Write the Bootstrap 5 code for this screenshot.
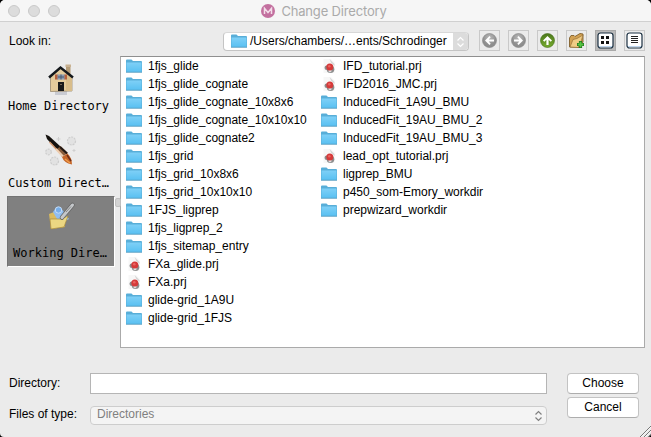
<!DOCTYPE html>
<html lang="en">
<head>
<meta charset="utf-8">
<title>Change Directory</title>
<link href="https://cdn.jsdelivr.net/npm/bootstrap@5.3.0/dist/css/bootstrap.min.css" rel="stylesheet">
<style>
html{background:#000}
body{width:651px;height:437px;overflow:hidden;background:#000;font:12px/18px "Liberation Sans",Arial,sans-serif;color:#000}
.window{height:437px;background:#ebebeb;border-radius:5px 5px 4px 4px;overflow:hidden}
.titlebar{height:22px;background:#f6f6f6;border-bottom:1px solid #d0d0d0;color:#aaa;font-family:Inter,sans-serif;font-size:13px;padding-right:3px}
.lights{left:8px;top:5px;gap:8px}
.lights i{width:12px;height:12px;border-radius:50%;background:#dcdcdc;border:1px solid #c9c9c9}
.title-text{letter-spacing:-.17px}
.lookrow{height:34px;padding:8px 6px 0 9px}
.path{width:246px;height:19px;margin-top:2px;border-radius:4px;background:#fff;border:1px solid #c4c4c4;border-top-color:#d8d8d8;line-height:16px}
.path-text{white-space:nowrap}
.path .stepper{width:15px;background:#dcdcdc}
.tool{width:21px;height:21px;padding:0;border:1px solid #c9c9c9;border-radius:0;background:#ebebeb}
.tool.on{background:#b9b9b9;border-color:#a9a9a9}
.main-area{height:292px}
.places{width:120px;font:12px/16px "DejaVu Sans Mono",monospace;padding-left:7px}
.place{width:108px;height:70px;border:1px solid transparent}
.place.on{height:71px;background:#808080;border-color:#737373 #fff #fff #737373}
.place span{white-space:pre}
.handle{left:115px;top:142px;width:6px;height:9px;background:#d3d3d3;border:1px solid #c0c0c0;border-radius:2px}
.files{width:525px;height:292px;background:#fff;border:1px solid #aaa;border-top-color:#8f8f8f;padding-left:5px}
.files ul{width:195px;margin:0;padding:0;list-style:none}
.files li{height:18px;display:flex;align-items:center;white-space:nowrap}
.files svg{margin-right:6px;flex:none}
.bottom{padding:25px 12px 0 9px}
.labels{width:81px;padding-top:1px;gap:13px}
.field{width:457px}
.dir{height:21px;border:1px solid #b5b5b5;border-radius:0;background:#fff;padding:0}
.types{height:19px;margin-top:12px;border:1px solid #cdcdcd;border-radius:4px;background:#f4f4f4;color:#808080;padding:0 3px 0 6px;line-height:15px}
.types span{padding-bottom:2px}
.actions{width:72px;margin-left:20px;gap:3px}
.push{height:21px;padding:0;background:#fff;border:1px solid #c3c3c3;border-bottom-color:#adadad;border-radius:4px;font-size:12px;line-height:17px;color:#000}
.grip{right:0;bottom:0}
</style>
</head>
<body>
<svg width="0" height="0" class="position-absolute">
<defs>
<linearGradient id="fg" x2="0" y2="1"><stop stop-color="#7fd0f7"/><stop offset="1" stop-color="#5bc1f2"/></linearGradient>
<radialGradient id="gg" cx=".5" cy=".3"><stop stop-color="#b9b9b9"/><stop offset="1" stop-color="#8e8e8e"/></radialGradient>
<linearGradient id="gr" x2="0" y2="1"><stop stop-color="#4c781b"/><stop offset="1" stop-color="#76ab2f"/></linearGradient>
<symbol id="folder" viewBox="0 0 16 16"><path d="M0 2.500Q0 1.500 1 1.500H5.500L7 3H15Q16 3 16 4V14H0Z" fill="#58aed8"/><path d="M.5 4.500H15.500V13.500H.5Z" fill="url(#fg)"/><path d="M0 14.500H16" stroke="#4795bd" stroke-opacity=".65"/></symbol>
<symbol id="prj" viewBox="0 0 16 16"><path d="M2.500 1H10L13.500 4.500V15H2.500Z" fill="#f7f7f7"/><path d="M8.500 1 13.500 6V8L10 4.500Z" fill="#d6d6d6"/><circle cx="5.800" cy="9.800" r="2.300" fill="#8a8a8a"/><circle cx="9.500" cy="11.300" r="3.800" fill="#8d8d8d"/><circle cx="9" cy="12.800" r="1.500" fill="#dedede"/><circle cx="8.800" cy="9" r="3.500" fill="#d63a3a"/><circle cx="8.300" cy="8.300" r="1.300" fill="#ea6561"/></symbol>
<symbol id="updown" viewBox="0 0 9 12"><path d="M1.500 4.500 4.500 1.500 7.500 4.500M1.500 7.500 4.500 10.500 7.500 7.500" fill="none" stroke="currentColor" stroke-width="1.200"/></symbol>
<symbol id="arrow" viewBox="0 0 15 15"><path d="M3 7.500 7.500 3 8.700 4.300 6.700 6.400H12V8.600H6.700L8.700 10.700 7.500 12Z" fill="#fff"/></symbol>
</defs></svg>

<div class="window position-relative">
  <header class="titlebar position-relative d-flex justify-content-center align-items-center">
    <div class="lights position-absolute d-flex"><i></i><i></i><i></i></div>
    <svg width="14" height="14" viewBox="0 0 14 14" style="margin-right:6px"><circle cx="7" cy="7" r="7" fill="#c3709f"/><path d="M3.500 10V4.300L7 8.500 10.500 4.300V10" fill="none" stroke="#f3dde9" stroke-width="1.500"/></svg>
    <span class="title-text">Change Directory</span>
  </header>

  <div class="lookrow d-flex align-items-start">
    <span class="me-auto" style="margin-top:2px">Look in:</span>
    <div class="path d-flex overflow-hidden">
      <svg width="16" height="16" style="margin:0 3px 0 7px;flex:none"><use href="#folder"/></svg>
      <span class="path-text flex-grow-1">/Users/chambers/…ents/Schrodinger</span>
      <span class="stepper d-flex align-items-center justify-content-center text-white"><svg width="9" height="12"><use href="#updown"/></svg></span>
    </div>
    <div class="d-flex gap-2" style="margin-left:10px">
      <button class="tool btn d-flex align-items-center justify-content-center" aria-label="Back"><svg width="15" height="15"><circle cx="7.500" cy="7.500" r="7" fill="url(#gg)" stroke="#858585" stroke-width=".6"/><use href="#arrow" width="15" height="15"/></svg></button>
      <button class="tool btn d-flex align-items-center justify-content-center" aria-label="Forward"><svg width="15" height="15"><circle cx="7.500" cy="7.500" r="7" fill="url(#gg)" stroke="#858585" stroke-width=".6"/><g transform="rotate(180 7.500 7.500)"><use href="#arrow" width="15" height="15"/></g></svg></button>
      <button class="tool btn d-flex align-items-center justify-content-center" aria-label="Up"><svg width="15" height="15"><circle cx="7.500" cy="7.500" r="7" fill="url(#gr)" stroke="#416b15" stroke-width=".6"/><g transform="rotate(90 7.500 7.500)"><use href="#arrow" width="15" height="15"/></g></svg></button>
      <button class="tool btn d-flex align-items-center justify-content-center" aria-label="New folder"><svg width="17" height="17" viewBox="0 0 17 17"><path d="M1.500 15V6L3 3.500H6L7 4.500 12 1.500 15 2V10L11 15.500Z" fill="#d2a153" stroke="#80602c" stroke-width=".9"/><path d="M2 15 5 7.500 9 6.500 15 3 12 13 10 15.500Z" fill="#f0cc85" stroke="#97713a" stroke-width=".7"/><path d="M12.500 9V16M9 12.500H16" stroke="#23751f" stroke-width="3.200"/><path d="M12.500 9.700V15.300M9.700 12.500H15.300" stroke="#56c442" stroke-width="1.800"/></svg></button>
      <button class="tool on btn d-flex align-items-center justify-content-center" aria-label="List view"><svg width="17" height="17" viewBox="0 0 17 17"><rect x="1" y="1" width="15" height="15" rx="2.500" fill="#fff" stroke="#1b3042" stroke-width="1.200"/><path d="M2 14.500H15" stroke="#bdd5ee"/><path d="M4 4H7V7H4ZM9 4H12V7H9ZM4 9H7V12H4ZM9 9H12V12H9Z" fill="#111"/></svg></button>
      <button class="tool btn d-flex align-items-center justify-content-center" aria-label="Detail view"><svg width="17" height="17" viewBox="0 0 17 17"><rect x="1" y="1" width="15" height="15" rx="2.500" fill="#fff" stroke="#1b3042" stroke-width="1.200"/><path d="M2 14.500H15" stroke="#bdd5ee"/><path d="M5 4.500H12M5 6.500H12M5 8.500H12M5 10.500H12" stroke="#222"/></svg></button>
    </div>
  </div>

  <div class="main-area d-flex position-relative">
    <aside class="places">
      <div class="place d-flex flex-column align-items-center">
        <svg width="26" height="32" viewBox="0 0 26 32" style="margin:7px 0 2px"><path d="M7 27H19V31H7Z" fill="#c9cbd2"/><path d="M18 1H22.500V11L18 7Z" fill="#b49c78"/><path d="M17.500 0.500H23V3H17.500Z" fill="#c9b292"/><path d="M2.500 12 13 3.500 24 12V27L2.500 27.500Z" fill="#e3cb9c" stroke="#8f8064" stroke-width=".7"/><path d="M18 8 24 12V27H18Z" fill="#d8bd8b"/><path d="M1 13.500 12.500 3.500 25 13.500" fill="none" stroke="#14181c" stroke-width="2.400"/><path d="M9 10.500H17V15.500H9Z" fill="#8a9bb2"/><path d="M7 10.500H9.500V15.500H7ZM16.500 10.500H19V15.500H16.500Z" fill="#b7613c"/><path d="M10 13H16M13 10.500V15.500" stroke="#4d5b6d"/><path d="M10 18H16V27H10Z" fill="#17191b"/><path d="M12 20.500H14" stroke="#766858"/></svg>
        <span style="margin-left:-7px;margin-right:-2px">Home Directory</span>
      </div>
      <div class="place d-flex flex-column align-items-center">
        <svg width="34" height="34" viewBox="0 0 34 34" style="margin:6px 0 8px"><g fill="#e2e2e2" stroke="#cdcdcd" stroke-width="1.200" stroke-dasharray="2 1"><circle cx="27.500" cy="8" r="4"/><circle cx="4.500" cy="19" r="2.800"/><circle cx="10.500" cy="28" r="4"/></g><path d="M14.500 4V8M12.500 6H16.500M30 16V19M28.500 17.500H31.500" stroke="#cfcfcf"/><path d="M1.500 1.500 5 3 17 14 13.500 17.500 3 6Z" fill="#15120f"/><path d="M5.500 9 15.500 19.500" stroke="#d69b72" stroke-width="1.500"/><path d="M13 16 16.500 13 24 20 18 24Z" fill="#8a5d3b"/><path d="M12 16 19.500 24" stroke="#efceb0" stroke-width="2"/><path d="M16 14 23 20.500" stroke="#211712" stroke-width="2"/><path d="M18 24 23.500 20.500Q28 25 28 31.500Q20 30 18 24Z" fill="#c56527"/><path d="M21 26 26 30" stroke="#ef9d4b" stroke-width="1.500"/><path d="M23 22 27 28" stroke="#6e2d15" stroke-width="1.500"/></svg>
        <span style="margin-left:-7px;margin-right:-2px">Custom Direct…</span>
      </div>
      <div class="place on d-flex flex-column align-items-center">
        <svg width="30" height="30" viewBox="0 0 30 30" style="margin:4px 0 14px"><path d="M3 13 8 11 9 13 19 14V26L5 28Z" fill="#dabb5e"/><path d="M7 11 10 6.500 15 7 23 18 14 23Z" fill="#8fbdf0"/><circle cx="12.500" cy="9" r="3.200" fill="#77aee9" stroke="#c6ddf7"/><path d="M4 18 15 18 22 15 18 26 5 28Z" fill="#ecd782" stroke="#a78a3c" stroke-width=".7"/><path d="M15 18 19 13" stroke="#577fae" stroke-width="2"/><path d="M16 16.500 26.500 4" stroke="#666" stroke-width="4.500" stroke-linecap="round"/><path d="M16 16.500 26.500 4" stroke="#c4c7ca" stroke-width="3" stroke-linecap="round"/><path d="M20 11 25 5.500" stroke="#888"/></svg>
        <span style="margin-right:2px">Working Dire…</span>
      </div>
    </aside>
    <section class="files d-flex">
      <ul>
        <li><svg width="16" height="16"><use href="#folder"/></svg><span>1fjs_glide</span></li>
        <li><svg width="16" height="16"><use href="#folder"/></svg><span>1fjs_glide_cognate</span></li>
        <li><svg width="16" height="16"><use href="#folder"/></svg><span>1fjs_glide_cognate_10x8x6</span></li>
        <li><svg width="16" height="16"><use href="#folder"/></svg><span>1fjs_glide_cognate_10x10x10</span></li>
        <li><svg width="16" height="16"><use href="#folder"/></svg><span>1fjs_glide_cognate2</span></li>
        <li><svg width="16" height="16"><use href="#folder"/></svg><span>1fjs_grid</span></li>
        <li><svg width="16" height="16"><use href="#folder"/></svg><span>1fjs_grid_10x8x6</span></li>
        <li><svg width="16" height="16"><use href="#folder"/></svg><span>1fjs_grid_10x10x10</span></li>
        <li><svg width="16" height="16"><use href="#folder"/></svg><span>1FJS_ligprep</span></li>
        <li><svg width="16" height="16"><use href="#folder"/></svg><span>1fjs_ligprep_2</span></li>
        <li><svg width="16" height="16"><use href="#folder"/></svg><span>1fjs_sitemap_entry</span></li>
        <li><svg width="16" height="16"><use href="#prj"/></svg><span>FXa_glide.prj</span></li>
        <li><svg width="16" height="16"><use href="#prj"/></svg><span>FXa.prj</span></li>
        <li><svg width="16" height="16"><use href="#folder"/></svg><span>glide-grid_1A9U</span></li>
        <li><svg width="16" height="16"><use href="#folder"/></svg><span>glide-grid_1FJS</span></li>
      </ul>
      <ul>
        <li><svg width="16" height="16"><use href="#prj"/></svg><span>IFD_tutorial.prj</span></li>
        <li><svg width="16" height="16"><use href="#prj"/></svg><span>IFD2016_JMC.prj</span></li>
        <li><svg width="16" height="16"><use href="#folder"/></svg><span>InducedFit_1A9U_BMU</span></li>
        <li><svg width="16" height="16"><use href="#folder"/></svg><span>InducedFit_19AU_BMU_2</span></li>
        <li><svg width="16" height="16"><use href="#folder"/></svg><span>InducedFit_19AU_BMU_3</span></li>
        <li><svg width="16" height="16"><use href="#prj"/></svg><span>lead_opt_tutorial.prj</span></li>
        <li><svg width="16" height="16"><use href="#folder"/></svg><span>ligprep_BMU</span></li>
        <li><svg width="16" height="16"><use href="#folder"/></svg><span>p450_som-Emory_workdir</span></li>
        <li><svg width="16" height="16"><use href="#folder"/></svg><span>prepwizard_workdir</span></li>
      </ul>
    </section>
    <div class="handle position-absolute"></div>
  </div>

  <form class="bottom d-flex">
    <div class="labels d-flex flex-column"><span>Directory:</span><span>Files of type:</span></div>
    <div class="field">
      <input class="dir form-control" type="text" aria-label="Directory">
      <div class="types d-flex justify-content-between align-items-center"><span>Directories</span><svg width="9" height="12"><use href="#updown"/></svg></div>
    </div>
    <div class="actions d-flex flex-column">
      <button type="button" class="push btn">Choose</button>
      <button type="button" class="push btn">Cancel</button>
    </div>
  </form>
  <svg class="grip position-absolute" width="12" height="12"><path d="M1 12 12 1M5 12 12 5M9 12 12 9" stroke="#777"/><path d="M2 12 12 2M6 12 12 6" stroke="#fff" stroke-width=".6"/></svg>
</div>
<script src="https://cdn.jsdelivr.net/npm/bootstrap@5.3.0/dist/js/bootstrap.bundle.min.js"></script>
</body>
</html>
